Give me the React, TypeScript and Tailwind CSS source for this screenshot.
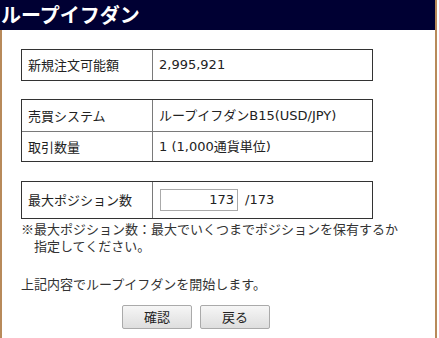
import React from "react";

const font = { fontFamily: '"DejaVu Sans", "Noto Sans CJK JP", sans-serif' };
const jp = { fontFamily: '"Noto Sans CJK JP", "Noto Sans", sans-serif' };

function Row({ label, children, last }: { label: string; children: React.ReactNode; last?: boolean }) {
  return (
    <div className={`flex ${last ? "" : "border-b border-[#7a7a7a]"}`}>
      <div className="w-[131px] shrink-0 border-r border-[#7a7a7a] pl-[6px] flex items-center" style={jp}>{label}</div>
      <div className="flex-1 pl-[6px] flex items-center">{children}</div>
    </div>
  );
}

export default function App() {
  return (
    <div className="w-[437px] h-[338px] bg-white text-[13px] text-[#222] border-r-2 border-[#b88a5a] flex flex-col" style={font}>
      <div className="h-[30px] bg-[#000033] text-white text-[20px] font-bold leading-[30px] pl-[1px]" style={jp}>
        ループイフダン
      </div>
      <div className="flex-1 border-l-2 border-[#b88a5a] pl-[19px] pt-[19px]">
        <div className="w-[352px] h-[32px] border border-[#333] flex flex-col [&>div]:h-full">
          <Row label="新規注文可能額" last>2,995,921</Row>
        </div>
        <div className="w-[352px] border border-[#333] mt-[18px]">
          <div className="h-[32px] flex flex-col [&>div]:h-full">
            <Row label="売買システム">ループイフダンB15(USD/JPY)</Row>
          </div>
          <div className="h-[29px] flex flex-col [&>div]:h-full">
            <Row label="取引数量" last>1 (1,000通貨単位)</Row>
          </div>
        </div>
        <div className="w-[352px] h-[38px] border border-[#333] mt-[19px] flex flex-col [&>div]:h-full">
          <Row label="最大ポジション数" last>
            <div className="ml-[1px] w-[78px] h-[22px] border border-[#aaa] text-right pr-[3px] leading-[20px]">173</div>
            <span className="ml-[7px]">/173</span>
          </Row>
        </div>
        <div className="mt-[1px] text-[#333]" style={jp}>
          <div className="h-[17px] leading-[17px]">※最大ポジション数：最大でいくつまでポジションを保有するか</div>
          <div className="h-[17px] leading-[17px] pl-[13px]">指定してください。</div>
        </div>
        <div className="mt-[20px] text-[#333]" style={jp}>上記内容でループイフダンを開始します。</div>
        <div className="mt-[11px] flex gap-[8px] pl-[101px]" style={jp}>
          <button className="w-[70px] h-[24px] border border-[#aaa] rounded-[2px] bg-gradient-to-b from-[#f6f6f6] to-[#dedede] text-[13px] text-[#222]">確認</button>
          <button className="w-[70px] h-[24px] border border-[#aaa] rounded-[2px] bg-gradient-to-b from-[#f6f6f6] to-[#dedede] text-[13px] text-[#222]">戻る</button>
        </div>
      </div>
    </div>
  );
}
